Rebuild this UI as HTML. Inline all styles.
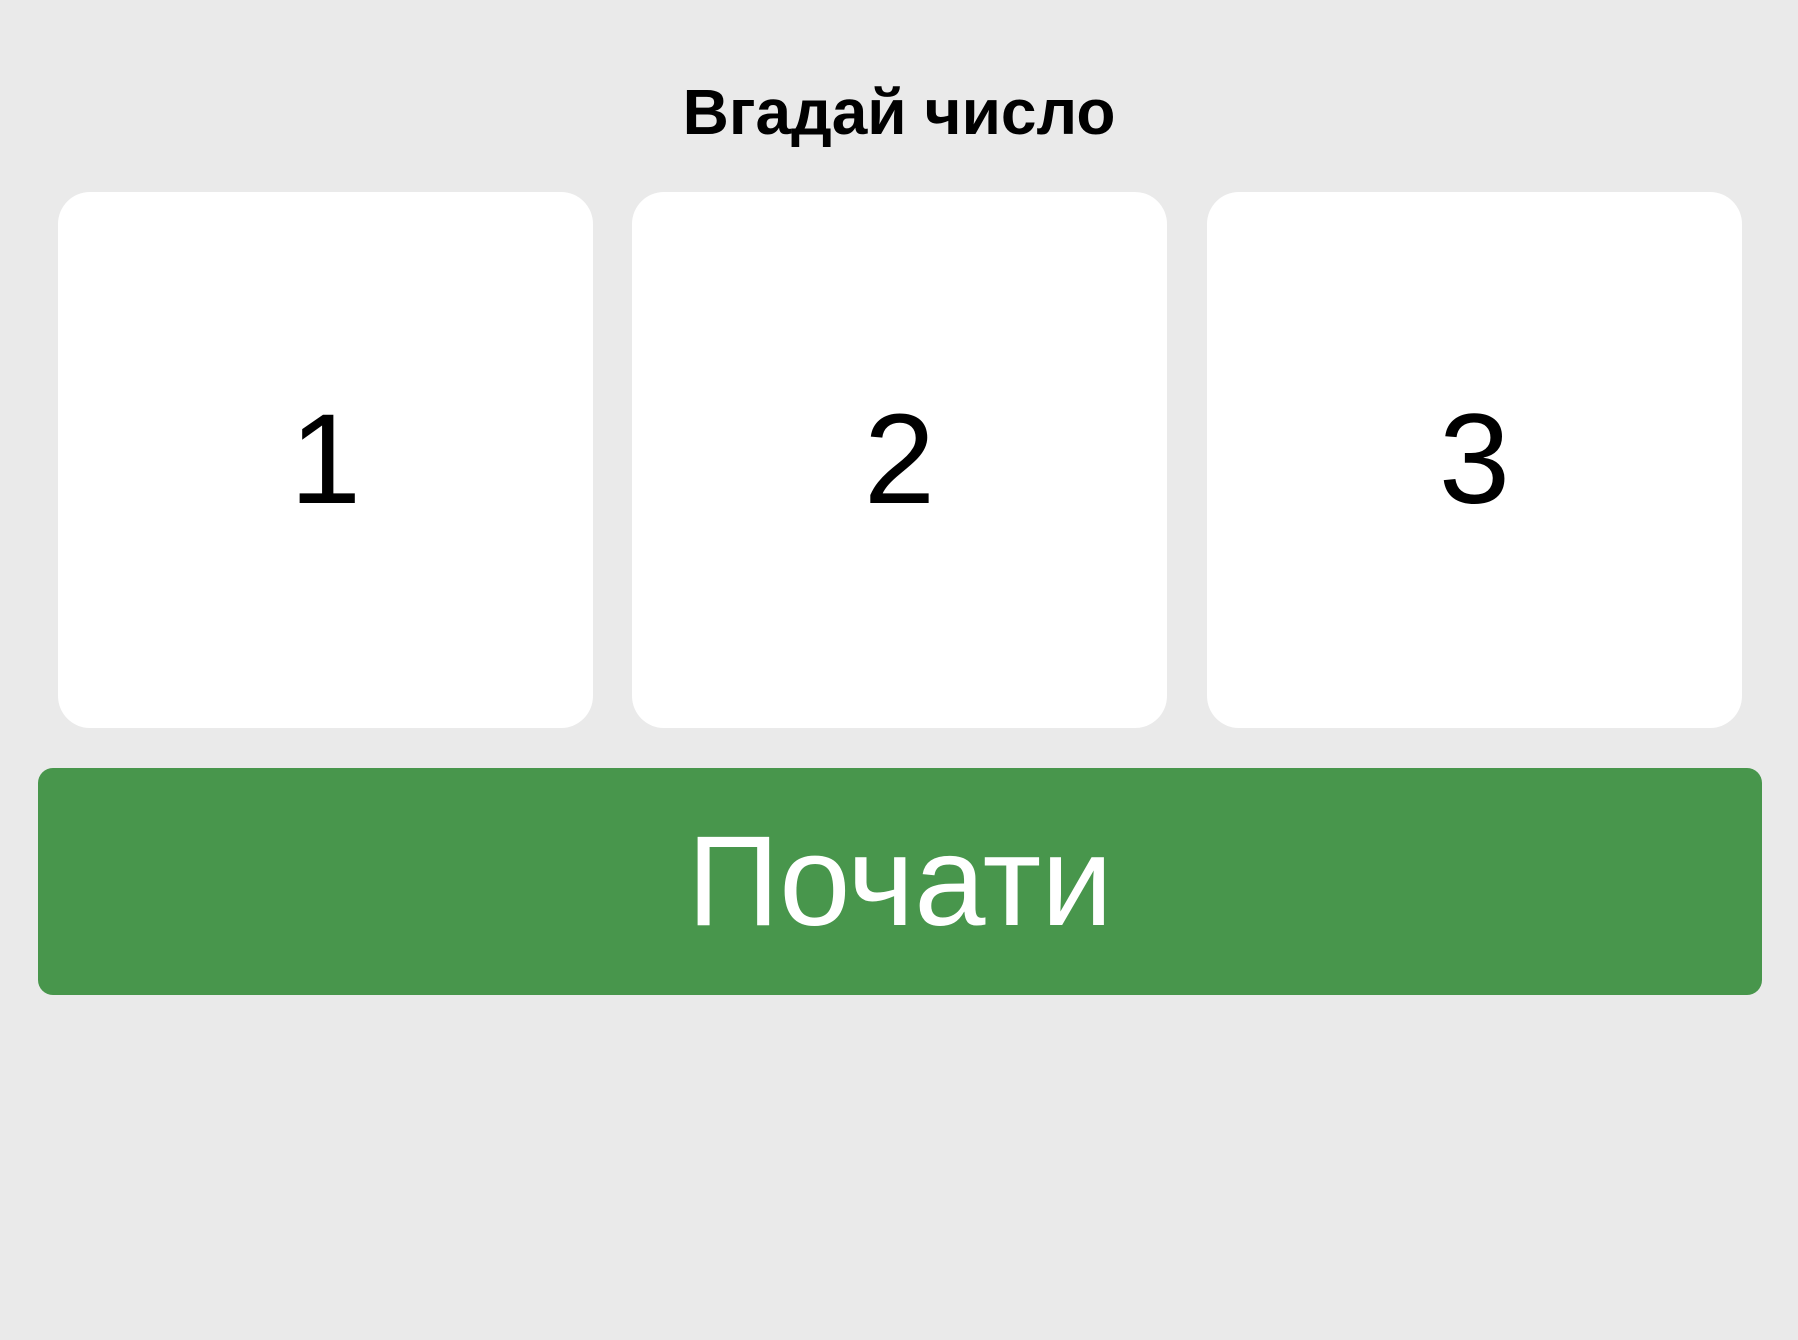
<!DOCTYPE html>
<html><head><meta charset="utf-8"><style>
html,body{margin:0;padding:0;width:1798px;height:1340px;background:#eaeaea;overflow:hidden;font-family:"Liberation Sans",Arial,sans-serif}
.t{position:absolute;left:0;width:1798px;top:72px;text-align:center;font-weight:bold;font-size:64px;line-height:80px;color:#000}
.c{position:absolute;top:192px;width:535px;height:536px;background:#fff;border-radius:32px;display:flex;align-items:center;justify-content:center;font-size:128px;color:#000;line-height:1}
.b{position:absolute;left:38px;top:768px;width:1724px;height:227px;background:#48964c;border-radius:15px;color:#fff;font-size:128px;display:flex;align-items:center;justify-content:center;line-height:1}
</style></head><body>
<div class="t">Вгадай число</div>
<div class="c" style="left:58px">1</div>
<div class="c" style="left:632px">2</div>
<div class="c" style="left:1207px">3</div>
<div class="b">Почати</div>
</body></html>
